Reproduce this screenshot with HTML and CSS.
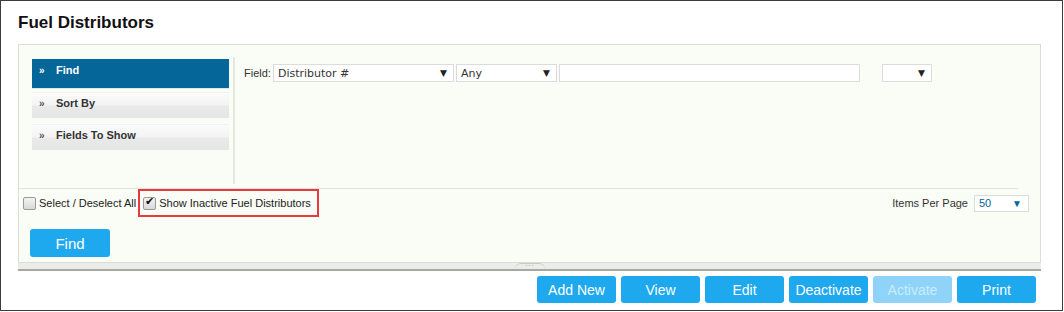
FILE: index.html
```html
<!DOCTYPE html>
<html lang="en">
<head>
    <meta charset="UTF-8">
    <title>Fuel Distributors</title>
    <link rel="stylesheet" href="styles.css">
</head>
<body>

    <div class="frame">
        <h1>Fuel Distributors</h1>

        <div class="panel">
            <div class="panel-top">
                <ul class="nav">
                    <li class="nav-item active"><span class="arrows">&raquo;</span>Find</li>
                    <li class="nav-item"><span class="arrows">&raquo;</span>Sort By</li>
                    <li class="nav-item"><span class="arrows">&raquo;</span>Fields To Show</li>
                </ul>

                <div class="filters">
                    <div class="filter-row">
                        <span class="field-label">Field:</span>
                        <div class="select select-field"><span>Distributor #</span><span class="caret">&#9660;</span></div>
                        <div class="select select-op"><span>Any</span><span class="caret">&#9660;</span></div>
                        <div class="text-input"></div>
                        <div class="select select-small"><span></span><span class="caret">&#9660;</span></div>
                    </div>
                </div>
            </div>

            <div class="panel-bottom">
                <div class="options-row">
                    <label class="check"><input type="checkbox">Select / Deselect All</label>
                    <span class="highlight">
                        <label class="check"><input type="checkbox" checked>Show Inactive Fuel Distributors</label>
                    </span>
                    <div class="per-page">
                        <span>Items Per Page</span>
                        <div class="select select-page"><span>50</span><span class="caret">&#9660;</span></div>
                    </div>
                </div>
                <button class="btn btn-find">Find</button>
            </div>
        </div>

        <div class="splitter">
            <div class="handle">&middot;&middot;&middot;</div>
        </div>

        <div class="actions">
            <button class="btn">Add New</button>
            <button class="btn">View</button>
            <button class="btn">Edit</button>
            <button class="btn">Deactivate</button>
            <button class="btn" disabled>Activate</button>
            <button class="btn">Print</button>
        </div>
    </div>

</body>
</html>
```

FILE: styles.css
```css
body {
    margin: 0;
    font-family: "Liberation Sans", Arial, sans-serif;
    background-color: #fff;
    color: #222;
}

.frame {
    width: 1063px;
    height: 311px;
    box-sizing: border-box;
    border: 1px solid #3c3c3c;
    padding: 12px 0 0 17px;
}

h1 {
    margin: 0 0 11px;
    font-size: 17px;
    line-height: 20px;
    font-weight: bold;
    color: #111;
}

.panel {
    width: 1023px;
    height: 219px;
    box-sizing: border-box;
    border: 1px solid #dcdcd8;
    background-color: #fafcf6;
}

.panel-top {
    display: flex;
    height: 144px;
    box-sizing: border-box;
    padding: 12px 0 0 13px;
    margin-right: 22px;
    border-bottom: 1px solid #e2e2dc;
}

.nav {
    list-style: none;
    margin: 2px 4px 0 0;
    padding: 0;
    width: 197px;
}

.nav-item {
    height: 25px;
    line-height: 20px;
    margin-bottom: 6px;
    font-size: 11px;
    font-weight: bold;
    color: #333;
    background: linear-gradient(#fbfbfb 0%, #f3f3f3 48%, #e9e9e9 52%, #e6e6e6 100%);
    border-top: 1px solid #f0f0f0;
}

.nav-item.active {
    height: 29px;
    line-height: 22px;
    margin-bottom: 3px;
    color: #fff;
    background: #05669a;
    border-top: none;
    border-bottom: 1px solid #d8e6ee;
}

.arrows {
    display: inline-block;
    width: 17px;
    padding-left: 7px;
    font-size: 10px;
    color: #555;
}

.active .arrows {
    color: #fff;
}

.filters {
    height: 120px;
    border-left: 2px solid #e6e6e0;
    padding: 7px 0 0 9px;
    flex: 1;
}

.filter-row {
    display: flex;
    align-items: center;
    gap: 2px;
}

.field-label {
    font-size: 11px;
    color: #333;
}

.select,
.text-input {
    height: 18px;
    box-sizing: border-box;
    border: 1px solid #dcdcdc;
    background-color: #fff;
}

.select {
    display: flex;
    align-items: center;
    justify-content: space-between;
    padding: 0 6px 0 4px;
    font-family: "DejaVu Sans", Verdana, sans-serif;
    font-size: 11px;
    color: #333;
}

.caret {
    font-size: 9px;
    color: #222;
}

.select-field {
    width: 181px;
}

.select-op {
    width: 101px;
}

.text-input {
    width: 301px;
}

.select-small {
    width: 50px;
    margin-left: 20px;
}

.panel-bottom {
    padding: 0 0 0 3px;
}

.options-row {
    display: flex;
    align-items: center;
    height: 28px;
    font-size: 11px;
    color: #222;
}

.check {
    display: flex;
    align-items: center;
}

.check input {
    appearance: none;
    width: 13px;
    height: 13px;
    margin: 0 3px 0 1px;
    border: 1px solid #9a9a9a;
    border-radius: 2px;
    background: linear-gradient(#f4f4f4, #d8d8d8);
    position: relative;
}

.check input:checked::after {
    content: "\2714";
    position: absolute;
    left: 1px;
    top: -3px;
    font-size: 11px;
    color: #111;
}

.highlight {
    display: flex;
    align-items: center;
    height: 28px;
    box-sizing: border-box;
    margin-left: 2px;
    padding: 0 6px 0 2px;
    border: 2px solid #e8393f;
}

.per-page {
    margin-left: auto;
    margin-right: 11px;
    display: flex;
    align-items: center;
    gap: 6px;
    font-size: 11px;
    color: #333;
}

.select-page {
    width: 55px;
    height: 17px;
    font-family: "Liberation Sans", Arial, sans-serif;
    color: #05669a;
}

.select-page .caret {
    color: #05669a;
    font-size: 10px;
}

.btn {
    width: 79px;
    height: 27px;
    border: none;
    border-radius: 3px;
    background-color: #1ea8ee;
    color: #fff;
    font-family: "Liberation Sans", Arial, sans-serif;
    font-size: 14px;
    cursor: pointer;
}

.btn:disabled {
    background-color: #8fd4f8;
    color: #c9edfd;
    cursor: default;
}

.btn-find {
    width: 80px;
    height: 28px;
    margin: 12px 0 0 8px;
    font-size: 15px;
}

.splitter {
    width: 1023px;
    height: 6px;
    background-color: #ececea;
    border-bottom: 2px solid #a8a8a0;
    display: flex;
    justify-content: center;
}

.handle {
    width: 30px;
    height: 5px;
    border-top: 1px solid #c8c8c4;
    border-radius: 6px 6px 0 0;
    font-size: 9px;
    line-height: 3px;
    text-align: center;
    color: #b0b0b0;
}

.actions {
    width: 1023px;
    box-sizing: border-box;
    display: flex;
    justify-content: flex-end;
    gap: 5px;
    margin-top: 5px;
    padding-right: 5px;
}
```
